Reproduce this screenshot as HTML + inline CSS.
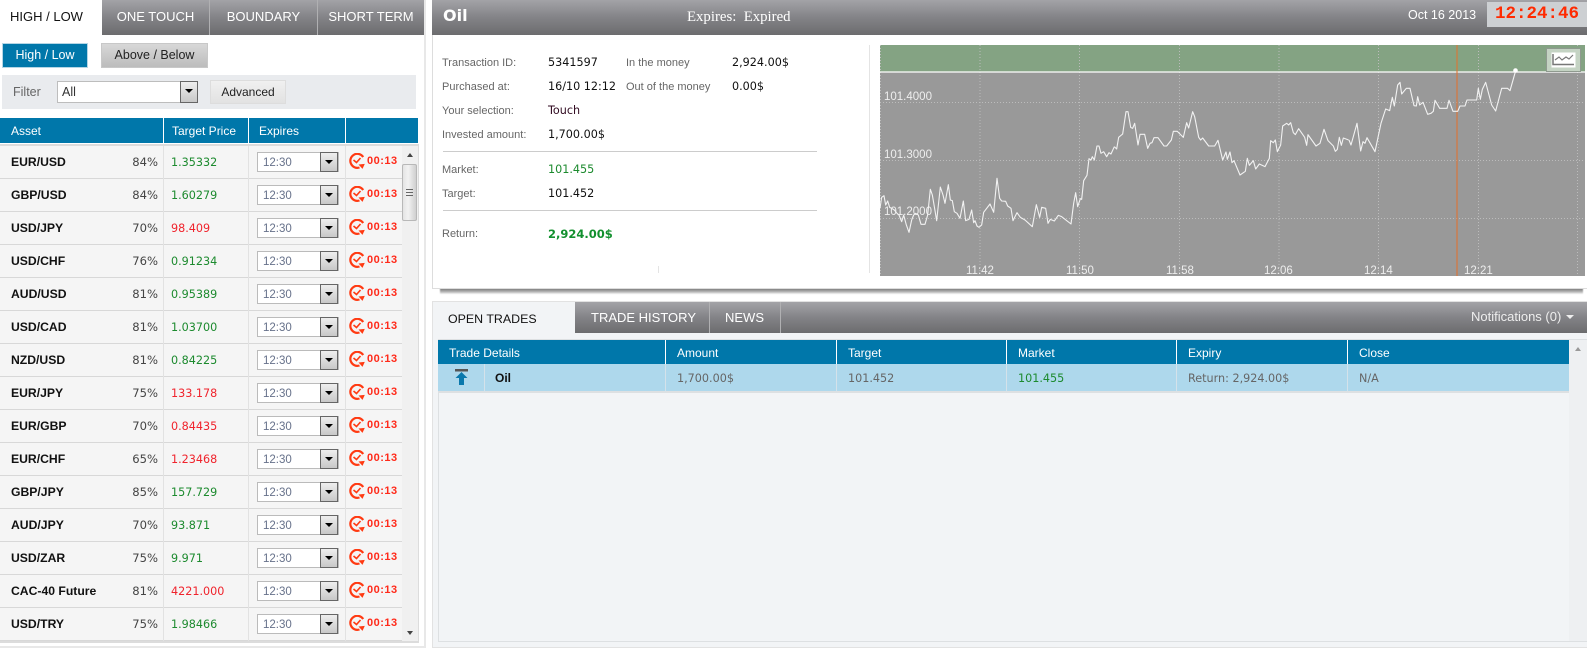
<!DOCTYPE html>
<html><head><meta charset="utf-8"><title>Trading</title>
<style>
*{box-sizing:border-box}
html,body{margin:0;padding:0;background:#fff;width:1587px;height:657px;overflow:hidden}
body{position:relative;font-family:"Liberation Sans",sans-serif;font-size:12px;color:#222}
.a{position:absolute;white-space:nowrap}
.hd{background:linear-gradient(#a3a3a7,#838387 50%,#6c6c6e)}
.tab{position:absolute;top:0;height:35px;line-height:33px;text-align:center;color:#fff;font-size:13px;border-left:1px solid #b0b0b2;background:linear-gradient(#a3a3a7,#838387 50%,#6c6c6e)}
.row{position:absolute;left:0;width:402px;height:33px;background:#f5f5f5;border-bottom:1px solid #d8d8d8;line-height:33px;font-family:"DejaVu Sans",sans-serif;font-size:11.2px}
.row b{position:absolute;left:11px;top:0;font:bold 12.2px/33px "Liberation Sans",sans-serif;color:#111;white-space:nowrap}
.row i{position:absolute;right:244px;top:0;font-style:normal;color:#444;font-size:11.6px}
.row u{position:absolute;left:171px;top:0;text-decoration:none}
.g{color:#1c8a2e}.r{color:#f0232c}
.v1,.v2,.v3{position:absolute;top:0;width:1px;height:33px;background:#e2e2e2}
.v1{left:163px}.v2{left:248px}.v3{left:345px}
.sel{position:absolute;left:257px;top:6px;width:82px;height:20px;background:#fff;border:1px solid #bbb;line-height:20px;padding-left:5px;color:#66718a;font:11.5px/20px "Liberation Sans",sans-serif}
.sel s{position:absolute;right:0;top:-1px;width:18px;height:20px;background:linear-gradient(#eee,#c8c8c8);border:1px solid #666}
.sel s:after,.fs:after{content:"";position:absolute;left:4px;top:7px;border:4px solid transparent;border-top:4px solid #000;border-bottom:0}
.row svg{position:absolute;left:349px;top:7px;width:16px;height:16px}
.row em{position:absolute;left:367px;top:0;font:bold 11px/31px "Liberation Sans",sans-serif;letter-spacing:.5px;color:#ff2a1a}
.l{position:absolute;color:#666;font-size:11px;line-height:14px;white-space:nowrap;margin-top:1px}
.k{position:absolute;color:#111;font:11.2px/14px "DejaVu Sans",sans-serif;white-space:nowrap;margin-top:1px}
.th{position:absolute;top:340px;height:24px;line-height:26px;color:#fff;font-size:12px;padding-left:11px;background:#0077aa;border-left:1px solid #fff}
.td{position:absolute;top:364px;height:29px;color:#666;font:11.2px/29px "DejaVu Sans",sans-serif;padding-left:11px;background:#aed8ec;border-left:1px solid #d4e2ea;border-bottom:2px solid #dde0e2}
.gx{stroke:#bcbcbc;stroke-width:1;stroke-dasharray:1 2}
</style></head>
<body>
<svg width="0" height="0" style="position:absolute"><symbol id="ck" viewBox="0 0 16 16"><path d="M14.200 4A7 7 0 1 0 10.500 14.500" fill="none" stroke="#ff3a12" stroke-width="2.200"/><path d="M9.500 11.500l6.300-.6-2.300 5z" fill="#ff3a12"/><path d="M4.500 7l3 2.500 4-4.500" fill="none" stroke="#ff3a12" stroke-width="1.600"/></symbol></svg>

<!-- LEFT PANEL -->
<div class="a" style="left:424px;top:0;width:2px;height:648px;background:#e8e8e8"></div>
<div class="a" style="left:0;top:646px;width:426px;height:2px;background:#e8e8e8"></div>
<div class="a" style="left:10px;top:8px;font-size:13px;color:#111;line-height:18px">HIGH / LOW</div>
<div class="tab" style="left:102px;width:107px;border-left:0">ONE TOUCH</div>
<div class="tab" style="left:209px;width:108px">BOUNDARY</div>
<div class="tab" style="left:317px;width:107px">SHORT TERM</div>

<div class="a" style="left:2px;top:43px;width:86px;height:25px;background:#0077aa;border:1px solid #b5d6e5;color:#fff;text-align:center;line-height:23px;font-size:12.500px">High / Low</div>
<div class="a" style="left:101px;top:43px;width:107px;height:25px;background:linear-gradient(#d8d8d8,#bcbcbc);border:1px solid #c8c8c8;color:#222;text-align:center;line-height:23px;font-size:12.500px">Above / Below</div>

<div class="a" style="left:2px;top:75px;width:414px;height:34px;background:#e9ebee"></div>
<div class="a" style="left:13px;top:84px;color:#666;font-size:12.500px;line-height:16px">Filter</div>
<div class="a" style="left:57px;top:81px;width:141px;height:22px;background:#fff;border:1px solid #bdbdbd;padding-left:4px;line-height:20px;font-size:12.500px;color:#333">All</div>
<div class="a fs" style="left:180px;top:81px;width:18px;height:22px;background:linear-gradient(#eee,#c8c8c8);border:1px solid #666"></div>
<div class="a" style="left:210px;top:80px;width:76px;height:24px;background:linear-gradient(#f0f0f0,#e2e2e2);border:1px solid #ddd;text-align:center;line-height:22px;font-size:12px">Advanced</div>

<div class="a" style="left:0;top:118px;width:418px;height:25px;background:#0077aa"></div>
<div class="a" style="left:11px;top:123px;color:#fff;line-height:16px">Asset</div>
<div class="a" style="left:172px;top:123px;color:#fff;line-height:16px">Target Price</div>
<div class="a" style="left:259px;top:123px;color:#fff;line-height:16px">Expires</div>
<div class="a" style="left:163px;top:118px;width:1px;height:25px;background:#fff"></div>
<div class="a" style="left:248px;top:118px;width:1px;height:25px;background:#fff"></div>
<div class="a" style="left:345px;top:118px;width:1px;height:25px;background:#fff"></div>

<div class="a" style="left:0;top:144px;width:419px;height:499px;background:#f0f0f0;border-top:2px solid #dcdcdc;border-right:1px solid #dcdcdc;border-bottom:2px solid #dcdcdc"></div>

<div class="row" style="top:146px"><b>EUR/USD</b><i>84%</i><u class="g">1.35332</u><span class="v1"></span><span class="v2"></span><span class="v3"></span><div class="sel">12:30<s></s></div><svg><use href="#ck"/></svg><em>00:13</em></div>
<div class="row" style="top:179px"><b>GBP/USD</b><i>84%</i><u class="g">1.60279</u><span class="v1"></span><span class="v2"></span><span class="v3"></span><div class="sel">12:30<s></s></div><svg><use href="#ck"/></svg><em>00:13</em></div>
<div class="row" style="top:212px"><b>USD/JPY</b><i>70%</i><u class="r">98.409</u><span class="v1"></span><span class="v2"></span><span class="v3"></span><div class="sel">12:30<s></s></div><svg><use href="#ck"/></svg><em>00:13</em></div>
<div class="row" style="top:245px"><b>USD/CHF</b><i>76%</i><u class="g">0.91234</u><span class="v1"></span><span class="v2"></span><span class="v3"></span><div class="sel">12:30<s></s></div><svg><use href="#ck"/></svg><em>00:13</em></div>
<div class="row" style="top:278px"><b>AUD/USD</b><i>81%</i><u class="g">0.95389</u><span class="v1"></span><span class="v2"></span><span class="v3"></span><div class="sel">12:30<s></s></div><svg><use href="#ck"/></svg><em>00:13</em></div>
<div class="row" style="top:311px"><b>USD/CAD</b><i>81%</i><u class="g">1.03700</u><span class="v1"></span><span class="v2"></span><span class="v3"></span><div class="sel">12:30<s></s></div><svg><use href="#ck"/></svg><em>00:13</em></div>
<div class="row" style="top:344px"><b>NZD/USD</b><i>81%</i><u class="g">0.84225</u><span class="v1"></span><span class="v2"></span><span class="v3"></span><div class="sel">12:30<s></s></div><svg><use href="#ck"/></svg><em>00:13</em></div>
<div class="row" style="top:377px"><b>EUR/JPY</b><i>75%</i><u class="r">133.178</u><span class="v1"></span><span class="v2"></span><span class="v3"></span><div class="sel">12:30<s></s></div><svg><use href="#ck"/></svg><em>00:13</em></div>
<div class="row" style="top:410px"><b>EUR/GBP</b><i>70%</i><u class="r">0.84435</u><span class="v1"></span><span class="v2"></span><span class="v3"></span><div class="sel">12:30<s></s></div><svg><use href="#ck"/></svg><em>00:13</em></div>
<div class="row" style="top:443px"><b>EUR/CHF</b><i>65%</i><u class="r">1.23468</u><span class="v1"></span><span class="v2"></span><span class="v3"></span><div class="sel">12:30<s></s></div><svg><use href="#ck"/></svg><em>00:13</em></div>
<div class="row" style="top:476px"><b>GBP/JPY</b><i>85%</i><u class="g">157.729</u><span class="v1"></span><span class="v2"></span><span class="v3"></span><div class="sel">12:30<s></s></div><svg><use href="#ck"/></svg><em>00:13</em></div>
<div class="row" style="top:509px"><b>AUD/JPY</b><i>70%</i><u class="g">93.871</u><span class="v1"></span><span class="v2"></span><span class="v3"></span><div class="sel">12:30<s></s></div><svg><use href="#ck"/></svg><em>00:13</em></div>
<div class="row" style="top:542px"><b>USD/ZAR</b><i>75%</i><u class="g">9.971</u><span class="v1"></span><span class="v2"></span><span class="v3"></span><div class="sel">12:30<s></s></div><svg><use href="#ck"/></svg><em>00:13</em></div>
<div class="row" style="top:575px"><b>CAC-40 Future</b><i>81%</i><u class="r">4221.000</u><span class="v1"></span><span class="v2"></span><span class="v3"></span><div class="sel">12:30<s></s></div><svg><use href="#ck"/></svg><em>00:13</em></div>
<div class="row" style="top:608px"><b>USD/TRY</b><i>75%</i><u class="g">1.98466</u><span class="v1"></span><span class="v2"></span><span class="v3"></span><div class="sel">12:30<s></s></div><svg><use href="#ck"/></svg><em>00:13</em></div>

<!-- left scrollbar -->
<div class="a" style="left:402px;top:164px;width:15px;height:57px;background:linear-gradient(90deg,#e4e4e4,#f2f2f2 40%,#cfcfcf);border:1px solid #b8b8b8;border-radius:2px"></div>
<div class="a" style="left:406px;top:189px;width:7px;height:7px;border-top:1px solid #666;border-bottom:1px solid #666"><div style="height:1px;margin-top:2px;background:#666"></div></div>
<div class="a" style="left:407px;top:153px;border:3.500px solid transparent;border-bottom:4px solid #444;border-top:0"></div>
<div class="a" style="left:407px;top:631px;border:3.500px solid transparent;border-top:4px solid #444;border-bottom:0"></div>

<!-- TOP RIGHT PANEL -->
<div class="a" style="left:440px;top:288px;width:1143px;height:6px;background:linear-gradient(#6e6e6e,#b0b0b0 60%,#f4f4f4);filter:blur(.6px)"></div>
<div class="a" style="left:432px;top:0;width:1155px;height:289px;background:#fff;border-left:1px solid #ddd;border-bottom:1px solid #ddd"></div>
<div class="a hd" style="left:432px;top:0;width:1155px;height:35px"></div>
<div class="a" style="left:443px;top:5px;color:#fff;font:bold 16px/22px 'DejaVu Sans',sans-serif">Oil</div>
<div class="a" style="left:687px;top:8px;color:#fff;font-family:'Liberation Serif',serif;font-size:14.800px;line-height:18px;white-space:pre">Expires:  Expired</div>
<div class="a" style="left:1408px;top:7px;color:#fff;font-size:12.500px;line-height:16px">Oct 16 2013</div>
<div class="a" style="left:1487px;top:2px;width:100px;height:25px;background:#cdd0d3;color:#ff2a00;font:bold 17.500px/25px 'Liberation Mono',monospace;text-align:center">12:24:46</div>

<div class="l" style="left:442px;top:55px">Transaction ID:</div><div class="k" style="left:548px;top:55px">5341597</div>
<div class="l" style="left:626px;top:55px">In the money</div><div class="k" style="left:732px;top:55px">2,924.00$</div>
<div class="l" style="left:442px;top:79px">Purchased at:</div><div class="k" style="left:548px;top:79px">16/10 12:12</div>
<div class="l" style="left:626px;top:79px">Out of the money</div><div class="k" style="left:732px;top:79px">0.00$</div>
<div class="l" style="left:442px;top:103px">Your selection:</div><div class="k" style="left:548px;top:103px;color:#300a20">Touch</div>
<div class="l" style="left:442px;top:127px">Invested amount:</div><div class="k" style="left:548px;top:127px">1,700.00$</div>
<div class="a" style="left:443px;top:151px;width:374px;height:1px;background:#ccc"></div>
<div class="l" style="left:442px;top:162px">Market:</div><div class="k" style="left:548px;top:162px;color:#1c8a2e">101.455</div>
<div class="l" style="left:442px;top:186px">Target:</div><div class="k" style="left:548px;top:186px">101.452</div>
<div class="a" style="left:443px;top:210px;width:374px;height:1px;background:#ccc"></div>
<div class="l" style="left:442px;top:226px">Return:</div><div class="k" style="left:548px;top:226px;color:#12902e;font-weight:bold;font-size:11.500px">2,924.00$</div>
<div class="a" style="left:658px;top:266px;width:1px;height:7px;background:#e4e4e4"></div>
<div class="a" style="left:869px;top:45px;width:1px;height:228px;background:#e4e4e4"></div>

<!-- CHART -->
<svg class="a" style="left:880px;top:45px" width="705" height="231" viewBox="880 45 705 231">
<rect x="880" y="45" width="705" height="231" fill="#999"/>
<rect x="880" y="45" width="705" height="27" fill="#84a383"/>
<g class="gx" fill="none">
<path d="M880.500 45V276M980 45V276M1079.500 45V276M1179.500 45V276M1279 45V276M1378.500 45V276M1478.500 45V276M1577.500 45V276"/>
<path d="M880 102.500H1585M880 160.500H1585M880 218.500H1585"/>
</g>
<path d="M880 72H1585" stroke="#fff" stroke-width="1.300"/>
<path d="M1457 45V276" stroke="#e4702c" stroke-width="1"/>
<g fill="#eee" font-family="'Liberation Sans',sans-serif" font-size="11.500">
<text x="884" y="100">101.4000</text><text x="884" y="158">101.3000</text><text x="884" y="215">101.2000</text>
<text x="966" y="274">11:42</text><text x="1066" y="274">11:50</text><text x="1166" y="274">11:58</text><text x="1264" y="274">12:06</text><text x="1364" y="274">12:14</text><text x="1464" y="274">12:21</text>
</g>
<g fill="none" stroke="#f2f2f2" stroke-width="3.300" stroke-linejoin="round">
<polyline transform="translate(875 100) scale(.33333)" points="15,325 20,292 27,287 32,315 38,303 44,322 50,325 58,330 66,340 72,345 80,365 86,345 94,375 102,397 110,360 116,345 122,340 130,345 138,373 150,373 158,345 166,268 172,285 178,320 185,362 196,261 204,285 210,310 220,254 226,300 232,302 238,335 246,340 255,355 265,303 272,362 282,358 290,330 296,368 300,362 306,378 312,382 320,375 326,337 345,312 356,337 366,235 374,295 380,303 392,304 398,318 408,325 414,362 426,338 436,352 450,360 472,380 484,314 494,352 500,322 512,325 519,370 526,358 538,363 550,346 560,350 588,372 596,310 602,278 608,320 616,296 620,298 626,242 636,226 642,176 648,180 652,170 658,180 666,138 672,138 678,160 686,155 695,170 702,158 708,162 718,140"/>
<polyline transform="translate(1110 90) scale(.33333)" points="13,170 20,177 26,142 38,132 48,65 54,65 62,112 68,115 74,100 84,165 90,133 104,133 113,175 120,160 126,158 132,143 144,143 162,168 170,168 184,150 190,124 202,124 220,142 230,98 236,114 248,65 254,80 266,142 272,150 278,144 296,168 314,168 324,151 338,210 348,186 352,208 360,186 366,218 372,212 390,255 406,244 412,205 418,226 430,212 437,237 448,222 465,230 478,205 482,152 490,158 496,150 502,185 512,165 518,108 530,100 536,105 542,98 550,128 556,134 566,116 584,142 590,166 594,134 618,168 630,160 642,118 654,152 670,168 676,184 682,178 688,142 694,166 700,144 716,150"/>
<polyline transform="translate(1345 40) scale(.33333)" points="12,300 18,315 36,250 47,333 54,305 60,310 66,293 90,335 108,250 122,207 134,212 142,172 148,198 158,135 165,127 170,162 184,145 195,145 207,197 214,198 218,170 224,195 234,187 248,223 258,220 265,214 270,181 284,205 306,205 312,181 324,214 338,214 345,198 360,198 366,180 395,180 400,145 406,178 412,148 422,127 440,195 452,213 470,145 488,145 495,152 512,92"/>
</g>
<circle cx="1515.500" cy="70.500" r="2.300" fill="#fff"/>
<rect x="1546.500" y="48.500" width="34" height="23" fill="#c4d3c3" stroke="#8f9a8f"/>
<rect x="1552" y="53" width="23" height="14" fill="#fff" stroke="#fff"/>
<path d="M1553 54V64.500H1574" fill="none" stroke="#777" stroke-width="1.500"/>
<path d="M1555 60l4-3 3 3 4-3 3 2 4-4" fill="none" stroke="#777" stroke-width="1.200"/>
</svg>

<!-- BOTTOM PANEL -->
<div class="a" style="left:432px;top:301px;width:1155px;height:347px;background:#f2f4f6;border:1px solid #e2e2e2;border-right:0"></div>
<div class="a hd" style="left:575px;top:302px;width:1012px;height:31px"></div>
<div class="a" style="left:448px;top:310px;font-size:12.400px;line-height:18px;color:#111">OPEN TRADES</div>
<div class="a" style="left:591px;top:309px;font-size:13px;line-height:18px;color:#fff">TRADE HISTORY</div>
<div class="a" style="left:725px;top:309px;font-size:13px;line-height:18px;color:#fff">NEWS</div>
<div class="a" style="left:709px;top:302px;width:1px;height:31px;background:#b0b0b2"></div>
<div class="a" style="left:780px;top:302px;width:1px;height:31px;background:#b0b0b2"></div>
<div class="a" style="left:1471px;top:309px;font-size:13px;line-height:16px;color:#eee">Notifications (0)</div>
<div class="a" style="left:1566px;top:315px;border:4px solid transparent;border-top:4px solid #eee;border-bottom:0"></div>

<div class="a" style="left:438px;top:339px;width:1149px;height:303px;border:1px solid #dde0e2;border-right:0"></div>
<div class="a" style="left:1569px;top:340px;width:18px;height:301px;background:#eef0f2"></div>
<div class="a" style="left:1575px;top:347px;border:3.500px solid transparent;border-bottom:4px solid #999;border-top:0"></div>

<div class="th" style="left:438px;width:227px;border-left:0">Trade Details</div>
<div class="th" style="left:665px;width:171px">Amount</div>
<div class="th" style="left:836px;width:170px">Target</div>
<div class="th" style="left:1006px;width:170px">Market</div>
<div class="th" style="left:1176px;width:171px">Expiry</div>
<div class="th" style="left:1347px;width:222px">Close</div>

<div class="td" style="left:438px;width:46px;border-left:0"></div>
<svg class="a" style="left:455px;top:369px" width="14" height="17"><rect x="0" y="0" width="13" height="2.500" fill="#555"/><path d="M6.500 3L12.500 9H9V16H4V9H.5z" fill="#0a78ac"/></svg>
<div class="td" style="left:484px;width:181px;color:#111;font:bold 12px/29px 'Liberation Sans',sans-serif;padding-left:10px">Oil</div>
<div class="td" style="left:665px;width:171px">1,700.00$</div>
<div class="td" style="left:836px;width:170px">101.452</div>
<div class="td" style="left:1006px;width:170px;color:#1c8a2e">101.455</div>
<div class="td" style="left:1176px;width:171px">Return: 2,924.00$</div>
<div class="td" style="left:1347px;width:222px">N/A</div>
</body></html>
